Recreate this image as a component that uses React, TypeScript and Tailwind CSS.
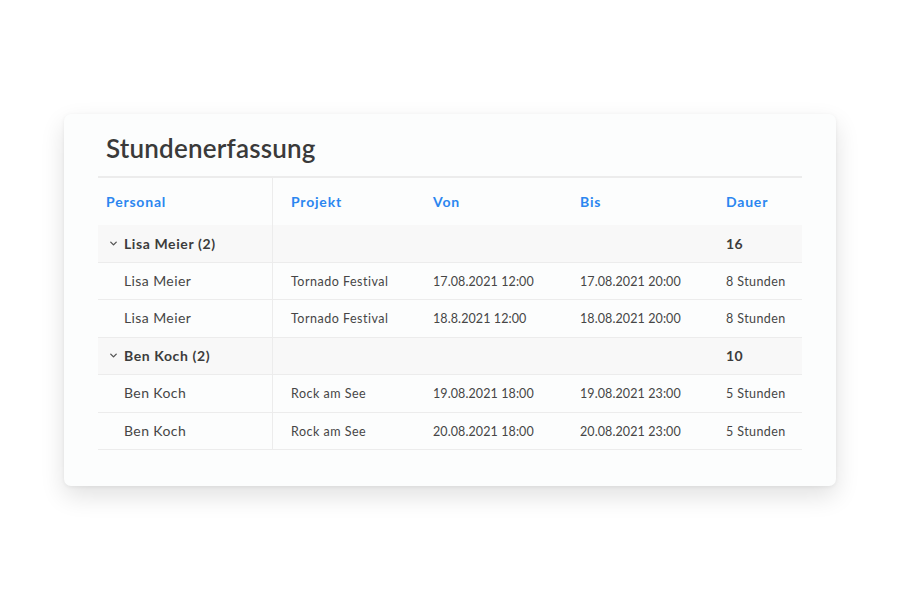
import { ChevronDown } from "lucide-react";

type Entry = { name: string; project: string; from: string; to: string; duration: string };

const groups: { name: string; total: string; entries: Entry[] }[] = [
  {
    name: "Lisa Meier",
    total: "16",
    entries: [
      { name: "Lisa Meier", project: "Tornado Festival", from: "17.08.2021 12:00", to: "17.08.2021 20:00", duration: "8 Stunden" },
      { name: "Lisa Meier", project: "Tornado Festival", from: "18.8.2021 12:00", to: "18.08.2021 20:00", duration: "8 Stunden" },
    ],
  },
  {
    name: "Ben Koch",
    total: "10",
    entries: [
      { name: "Ben Koch", project: "Rock am See", from: "19.08.2021 18:00", to: "19.08.2021 23:00", duration: "5 Stunden" },
      { name: "Ben Koch", project: "Rock am See", from: "20.08.2021 18:00", to: "20.08.2021 23:00", duration: "5 Stunden" },
    ],
  },
];

const cols = "grid grid-cols-[175px_142px_147px_146px_94px]";

function GroupRow({ name, count, total }: { name: string; count: number; total: string }) {
  return (
    <div className={`${cols} h-[37.5px] border-b-[1.5px] border-[#ececec] bg-[#f8f8f8] text-[14px] font-bold text-[#3c3c3c]`}>
      <div className="flex items-center border-r-[1.5px] border-[#ececec] pl-[10px] tracking-[0.6px]">
        <ChevronDown size={11} strokeWidth={3} className="mr-[5px] text-[#555]" />
        {name} ({count})
      </div>
      <div />
      <div />
      <div />
      <div className="flex items-center pl-[18px] tracking-[0.5px]">{total}</div>
    </div>
  );
}

function DataRow({ e }: { e: Entry }) {
  return (
    <div className={`${cols} h-[37.5px] border-b-[1.5px] border-[#ececec] text-[12.5px] tracking-[0.3px] text-[#464646]`}>
      <div className="flex items-center border-r-[1.5px] border-[#ececec] pb-[1px] pl-[26px] text-[14px] tracking-[0.4px]">
        {e.name}
      </div>
      <div className="flex items-center pl-[18px] pt-[3px] tracking-[0.5px]">{e.project}</div>
      <div className="flex items-center pl-[18px] pt-[3px] tracking-[0.1px]">{e.from}</div>
      <div className="flex items-center pl-[18px] pt-[3px] tracking-[0.1px]">{e.to}</div>
      <div className="flex items-center pl-[18px] pt-[3px] tracking-[0.4px]">{e.duration}</div>
    </div>
  );
}

export default function App() {
  return (
    <div className="min-h-[600px] w-[900px] bg-white pl-[64px] pt-[114px] font-['Lato',sans-serif]">
      <div className="h-[372px] w-[772px] rounded-[7px] bg-[#fcfdfd] px-[34px] pt-[17px] shadow-[0_10px_24px_rgba(0,0,0,0.12),0_1px_4px_rgba(0,0,0,0.06)]">
        <h1 className="h-[34px] pl-[8px] text-[26px] font-semibold leading-[34px] tracking-[0.2px] text-[#3a3a3a]">
          Stundenerfassung
        </h1>
        <div className="mt-[11px]">
          <div className={`${cols} h-[49px] border-t-2 border-[#ececec] text-[14px] font-bold tracking-[0.8px] text-[#2b86f0]`}>
            <div className="flex items-center border-r-[1.5px] border-[#ececec] pl-[8px]">Personal</div>
            <div className="flex items-center pl-[18px]">Projekt</div>
            <div className="flex items-center pl-[18px]">Von</div>
            <div className="flex items-center pl-[18px]">Bis</div>
            <div className="flex items-center pl-[18px]">Dauer</div>
          </div>
          {groups.map((g) => (
            <div key={g.name}>
              <GroupRow name={g.name} count={g.entries.length} total={g.total} />
              {g.entries.map((e, i) => (
                <DataRow key={i} e={e} />
              ))}
            </div>
          ))}
        </div>
      </div>
    </div>
  );
}
